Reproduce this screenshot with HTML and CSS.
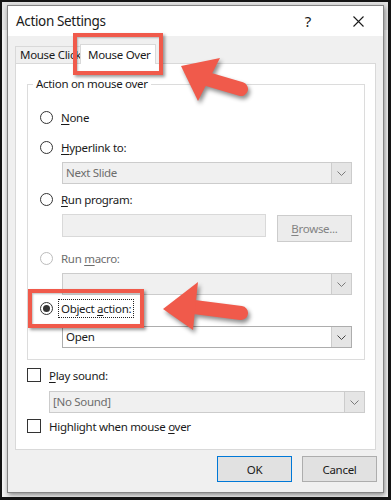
FILE: index.html
```html
<!DOCTYPE html>
<html lang="en">

<head>
  <meta charset="UTF-8">
  <meta name="viewport" content="width=device-width, initial-scale=1.0">
  <title>Action Settings</title>
  <link rel="stylesheet" href="styles.css">
</head>

<body>
  <div class="screen">
    <div class="dialog">
      <div class="titlebar">
        <span class="title">Action Settings</span>
        <span class="help">?</span>
        <svg class="close" width="11" height="11" viewBox="0 0 11 11">
          <path d="M0.5 0.5 L10.5 10.5 M10.5 0.5 L0.5 10.5" stroke="#1a1a1a" stroke-width="1.1" fill="none" />
        </svg>
      </div>

      <div class="tabs">
        <div class="tab">Mouse Click</div>
        <div class="tab active">Mouse Over</div>
      </div>

      <div class="panel">
        <fieldset class="group">
          <legend>Action on mouse over</legend>

          <div class="opt opt-first"><span class="radio"></span><span><u>N</u>one</span></div>

          <div class="opt opt-gap"><span class="radio"></span><span><u>H</u>yperlink to:</span></div>
          <div class="select disabled sel-gap">
            <span class="value">Next Slide</span>
            <span class="drop"><svg width="9" height="5" viewBox="0 0 9 5"><path d="M0.5 0.5 L4.5 4.5 L8.5 0.5" stroke="#7a7a7a" fill="none" /></svg></span>
          </div>

          <div class="opt sel-next"><span class="radio"></span><span><u>R</u>un program:</span></div>
          <div class="file-row">
            <div class="textbox"></div>
            <div class="btn browse"><u>B</u>rowse...</div>
          </div>

          <div class="opt macro-row"><span class="radio off"></span><span class="grey">Run <u>m</u>acro:</span></div>
          <div class="select disabled sel-gap">
            <span class="value"></span>
            <span class="drop"><svg width="9" height="5" viewBox="0 0 9 5"><path d="M0.5 0.5 L4.5 4.5 L8.5 0.5" stroke="#7a7a7a" fill="none" /></svg></span>
          </div>

          <div class="opt obj-row"><span class="radio on"></span><span class="focus">Object <u>a</u>ction:</span></div>
          <div class="select obj-sel">
            <span class="value">Open</span>
            <span class="drop"><svg width="9" height="5" viewBox="0 0 9 5"><path d="M0.5 0.5 L4.5 4.5 L8.5 0.5" stroke="#444" fill="none" /></svg></span>
          </div>
        </fieldset>

        <div class="opt check-row"><span class="check"></span><span><u>P</u>lay sound:</span></div>
        <div class="select disabled sound-sel">
          <span class="value">[No Sound]</span>
          <span class="drop"><svg width="9" height="5" viewBox="0 0 9 5"><path d="M0.5 0.5 L4.5 4.5 L8.5 0.5" stroke="#7a7a7a" fill="none" /></svg></span>
        </div>
        <div class="opt highlight-row"><span class="check"></span><span>Highlight when mouse <u>o</u>ver</span></div>
      </div>

      <div class="buttons">
        <div class="btn default">OK</div>
        <div class="btn">Cancel</div>
      </div>
    </div>

    <!-- annotations -->
    <div class="mark mark-tab"></div>
    <div class="mark mark-obj"></div>
    <svg class="arrows" width="391" height="500" viewBox="0 0 391 500">
      <g class="arrow">
        <line x1="207" y1="79" x2="241" y2="89" stroke="#f05a4b" stroke-width="14" stroke-linecap="round" />
        <polygon points="181,66 220,58 198,101" fill="#f05a4b" />
      </g>
      <g class="arrow">
        <line x1="194" y1="307" x2="241" y2="313" stroke="#f05a4b" stroke-width="14" stroke-linecap="round" />
        <polygon points="163,309 198,282 193,330" fill="#f05a4b" />
      </g>
    </svg>
  </div>
</body>

</html>
```

FILE: styles.css
```css
body {
  margin: 0;
  font-family: "Noto Sans", "Open Sans", sans-serif;
  font-size: 11.5px;
  letter-spacing: -0.3px;
  color: #1a1a1a;
}

u {
  text-decoration-thickness: 1px;
  text-underline-offset: 2px;
}

.screen {
  position: relative;
  width: 391px;
  height: 500px;
  box-sizing: border-box;
  border: 2px solid #141414;
  border-right-width: 3px;
  border-bottom-width: 3px;
  background: linear-gradient(#e4e4e4 0 28px, #f4f4f4 28px);
  padding: 3px 0 0 5px;
  overflow: hidden;
}

.dialog {
  width: 377px;
  height: 488px;
  box-sizing: border-box;
  border: 1px solid #858585;
  background-color: #f0f0f0;
  box-shadow: 1px 2px 5px rgba(0, 0, 0, 0.45);
  display: flex;
  flex-direction: column;
}

.titlebar {
  height: 30px;
  background-color: #fff;
  display: flex;
  align-items: center;
  padding-left: 8px;
}

.title {
  font-size: 13.5px;
  letter-spacing: -0.35px;
}

.help {
  margin-left: auto;
  font-size: 15px;
}

.close {
  margin-left: 42px;
  margin-right: 19px;
}

.tabs {
  height: 27px;
  display: flex;
  align-items: flex-end;
  padding-left: 7px;
}

.tab {
  width: 61px;
  height: 16px;
  padding-left: 4px;
  border: 1px solid #d9d9d9;
  border-bottom: none;
  line-height: 16px;
  white-space: nowrap;
  overflow: hidden;
}

.tab.active {
  position: relative;
  width: 67px;
  height: 19px;
  margin-left: -2px;
  margin-bottom: -1px;
  padding-left: 7px;
  background-color: #fff;
  line-height: 19px;
}

.panel {
  margin: 0 7px;
  height: 385px;
  border: 1px solid #d9d9d9;
  background-color: #fff;
  padding: 0 10px 0 11px;
}

.group {
  margin: 12px 0 0 0;
  height: 284px;
  box-sizing: border-box;
  border: 1px solid #dcdcdc;
  padding: 15px 12px 11px 12px;
  min-width: 0;
}

.group legend {
  margin-left: -7px;
  padding: 0 3px;
  line-height: 16px;
}

.opt {
  height: 20px;
  display: flex;
  align-items: center;
}

.radio {
  width: 11px;
  height: 11px;
  border: 1px solid #333;
  border-radius: 50%;
  background-color: #fff;
  margin-right: 8px;
  display: flex;
  align-items: center;
  justify-content: center;
}

.radio.off {
  border-color: #bcbcbc;
}

.radio.on::after {
  content: "";
  width: 7px;
  height: 7px;
  border-radius: 50%;
  background-color: #333;
}

.check {
  width: 12px;
  height: 12px;
  border: 1px solid #333;
  background-color: #fff;
  margin-right: 8px;
}

.grey {
  color: #6d6d6d;
}

.focus {
  outline: 1px dotted #222;
  outline-offset: 1px;
  margin-left: -1px;
  padding: 0 1px;
}

.opt-gap {
  margin-top: 10px;
}

.sel-gap {
  margin-top: 5px;
}

.sel-next {
  margin-top: 5px;
}

.select {
  height: 22px;
  box-sizing: border-box;
  margin-left: 22px;
  border: 1px solid #adadad;
  background-color: #fff;
  display: flex;
}

.select.disabled {
  border-color: #cccccc;
  background-color: #f0f0f0;
  color: #6d6d6d;
}

.select .value {
  flex: 1;
  padding-left: 3px;
  line-height: 20px;
}

.select .drop {
  width: 19px;
  border-left: 1px solid #cccccc;
  background-color: #e5e5e5;
  display: flex;
  align-items: center;
  justify-content: center;
}

.file-row {
  margin-top: 5px;
  margin-left: 22px;
  height: 28px;
  display: flex;
}

.textbox {
  width: 204px;
  height: 23px;
  box-sizing: border-box;
  border: 1px solid #d9d9d9;
  background-color: #f0f0f0;
}

.btn {
  width: 75px;
  height: 26px;
  box-sizing: border-box;
  border: 1px solid #adadad;
  background-color: #e1e1e1;
  display: flex;
  align-items: center;
  justify-content: center;
}

.browse {
  margin-left: auto;
  margin-top: 1px;
  height: 27px;
  border-color: #cccccc;
  background-color: #ececec;
  color: #838383;
}

.macro-row {
  margin-top: 6px;
}

.obj-row {
  margin-top: 3px;
}

.obj-sel {
  margin-top: 8px;
}

.check-row {
  margin-top: 5px;
}

.sound-sel {
  margin-top: 6px;
  margin-left: 22px;
}

.highlight-row {
  margin-top: 3px;
}

.buttons {
  display: flex;
  justify-content: flex-end;
  gap: 10px;
  padding: 6px 6px 0 0;
}

.btn.default {
  border-color: #0078d7;
}

.mark {
  position: absolute;
  border: 4px solid #f05a4b;
  box-shadow: 2px 2px 3px rgba(0, 0, 0, 0.4), inset 1px 1px 2px rgba(0, 0, 0, 0.25);
}

.mark-tab {
  left: 71px;
  top: 31px;
  width: 82px;
  height: 34px;
}

.mark-obj {
  left: 26px;
  top: 287px;
  width: 108px;
  height: 31px;
}

.arrows {
  position: absolute;
  left: -2px;
  top: -2px;
}

.arrow {
  filter: drop-shadow(2px 3px 2px rgba(0, 0, 0, 0.45));
}
```
